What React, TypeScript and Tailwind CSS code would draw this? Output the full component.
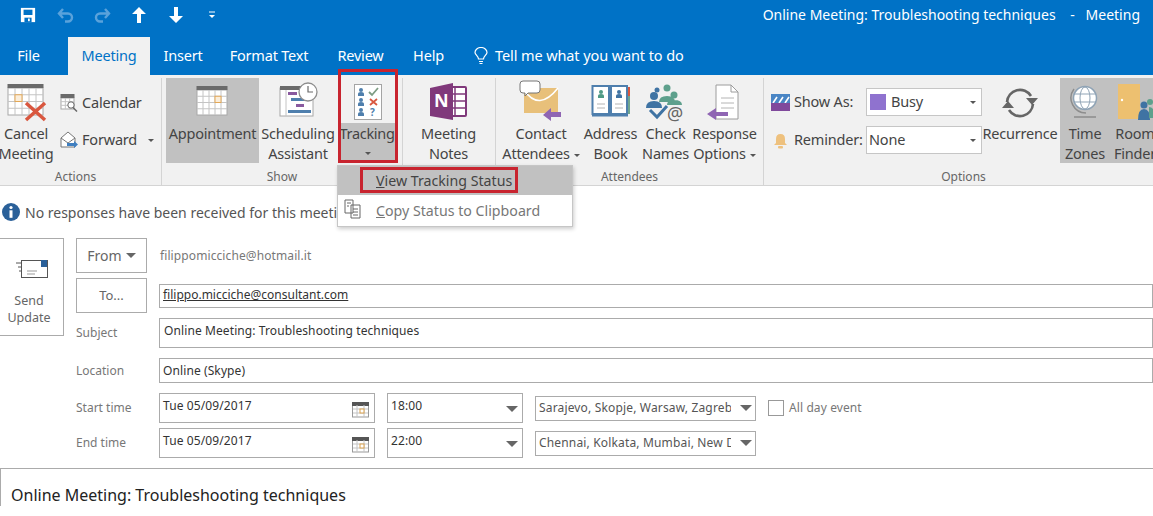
import * as React from "react";

const ui = { fontFamily: '"Noto Sans", "Open Sans", sans-serif' };

function CalGrid({ x, y, w, h, cols, rows, accent }: { x: number; y: number; w: number; h: number; cols: number; rows: number; accent?: [number, number] }) {
  const cw = w / cols;
  const ch = h / rows;
  return (
    <g>
      <rect x={x} y={y} width={w} height={h} fill="#fff" stroke="#a8a8a8" />
      {Array.from({ length: cols - 1 }).map((_, i) => (
        <line key={i} x1={x + cw * (i + 1)} x2={x + cw * (i + 1)} y1={y} y2={y + h} stroke="#c4c4c4" />
      ))}
      {Array.from({ length: rows - 1 }).map((_, i) => (
        <line key={i} y1={y + ch * (i + 1)} y2={y + ch * (i + 1)} x1={x} x2={x + w} stroke="#c4c4c4" />
      ))}
      {accent && <rect x={x + cw * accent[0]} y={y + ch * accent[1]} width={cw} height={ch} fill="#fbeedb" stroke="#e3a857" />}
      <rect x={x - 0.5} y={y - 4} width={w + 1} height={4} fill="#6a6a6a" />
    </g>
  );
}

function CancelIcon() {
  return (
    <svg width="48" height="44" viewBox="0 0 48 44">
      <CalGrid x={6} y={9} w={35} h={27} cols={5} rows={4} accent={[1, 1]} />
      <path d="M24 24 L43 41 M43 24 L24 41" stroke="#d9573f" strokeWidth="3.5" />
    </svg>
  );
}

function AppointmentIcon() {
  return (
    <svg width="34" height="32" viewBox="0 0 34 32">
      <CalGrid x={1} y={5} w={30} h={25} cols={5} rows={4} accent={[3, 1]} />
    </svg>
  );
}

function SchedulingIcon() {
  return (
    <svg width="44" height="42" viewBox="0 0 44 42">
      <rect x="4" y="8" width="33" height="28" fill="#fff" stroke="#a8a8a8" />
      <rect x="4" y="6" width="33" height="4" fill="#6a6a6a" />
      <rect x="12" y="12" width="9" height="3" fill="#8a5a9f" />
      <rect x="15" y="18" width="14" height="3" fill="#4f7fad" />
      <rect x="20" y="24" width="8" height="3" fill="#8a5a9f" />
      <rect x="12" y="30" width="23" height="3" fill="#4f7fad" />
      <path d="M10 10v26" stroke="#c4c4c4" />
      <circle cx="32" cy="12" r="9" fill="#fff" stroke="#8e8e8e" strokeWidth="1.3" />
      <path d="M32 6v6h5" fill="none" stroke="#6a6a6a" strokeWidth="1.2" />
    </svg>
  );
}

function Person({ x, y, c }: { x: number; y: number; c: string }) {
  return (
    <g fill={c}>
      <circle cx={x} cy={y} r="2" />
      <path d={`M${x - 3} ${y + 6} v-2 q0 -2 3 -2 q3 0 3 2 v2 z`} />
    </g>
  );
}

function TrackingIcon() {
  return (
    <svg width="30" height="38" viewBox="0 0 30 38">
      <rect x="1.5" y="1.5" width="27" height="35" fill="#fff" stroke="#a4a4a4" />
      <Person x={8} y={7} c="#4f7fad" />
      <Person x={8} y={17} c="#4f7fad" />
      <Person x={8} y={27} c="#4f7fad" />
      <path d="M16 9 l3 3 l6 -7" fill="none" stroke="#7d9c83" strokeWidth="1.8" />
      <path d="M17 16 l7 6 M24 16 l-7 6" stroke="#d9573f" strokeWidth="1.8" />
      <text x="17" y="33" fontSize="10" fontWeight="700" fill="#4f7fad" style={ui}>?</text>
    </svg>
  );
}

function NotesIcon() {
  return (
    <svg width="38" height="38" viewBox="0 0 38 38">
      <rect x="18" y="4" width="18" height="29" rx="1" fill="#fff" stroke="#80397b" strokeWidth="2" />
      <path d="M25 4v29M19 11h16M19 18h16M19 25h16" stroke="#80397b" strokeWidth="1.5" />
      <path d="M0 5 L23 0 V37 L0 33 Z" fill="#80397b" />
      <text x="4" y="24" fontSize="18" fontWeight="700" fill="#fff" style={ui}>N</text>
    </svg>
  );
}

function ContactIcon() {
  return (
    <svg width="44" height="42" viewBox="0 0 44 42">
      <rect x="5" y="8" width="34" height="25" fill="#e8c07a" />
      <path d="M5 10 Q20 32 39 8" fill="none" stroke="#fff" strokeWidth="1.6" />
      <path d="M4 1h14q3 0 3 3v6q0 3 -3 3H9l-3 3v-3H4q-3 0 -3 -3V4q0 -3 3 -3z" fill="#fff" stroke="#777" />
      <path d="M24 35 l8 -7 v4 h10 v5 h-10 v4 z" fill="#8f65b3" />
    </svg>
  );
}

function BookIcon() {
  return (
    <svg width="40" height="36" viewBox="0 0 40 36">
      <rect x="36" y="3" width="3" height="9" fill="#d9573f" />
      <rect x="36" y="12" width="3" height="9" fill="#6fa58f" />
      <rect x="36" y="21" width="3" height="9" fill="#6fa58f" />
      <path d="M1.5 2 H18 V30 H1.5 Z M20 2 H36 V30 H20 Z" fill="#fff" stroke="#4f7fad" strokeWidth="2" />
      <path d="M1 31.5 H37" stroke="#4f7fad" strokeWidth="2" />
      <Person x={10} y={8} c="#4f9a85" />
      <Person x={28} y={8} c="#3f73a3" />
      <path d="M6 20h8M6 24h8M24 20h8M24 24h8" stroke="#b4b4b4" />
    </svg>
  );
}

function NamesIcon() {
  return (
    <svg width="40" height="38" viewBox="0 0 40 38">
      <circle cx="21" cy="4" r="3.5" fill="#5ea08c" />
      <circle cx="11" cy="6" r="2.5" fill="#3f73a3" />
      <circle cx="28" cy="11" r="3.5" fill="#5ea08c" />
      <circle cx="8" cy="12" r="4" fill="#3f73a3" />
      <path d="M13 18 q0 -6 8 -6 q8 0 8 6 z M21 21 q0 -5 7 -5 q8 0 8 5 z" fill="#5ea08c" />
      <path d="M0 24 q0 -7 8 -7 q8 0 8 7 z" fill="#3f73a3" />
      <path d="M4 26 l7 7 l10 -11" fill="none" stroke="#3f73a3" strokeWidth="3" />
      <text x="21" y="36" fontSize="18" fill="#666" style={ui}>@</text>
    </svg>
  );
}

function ResponseIcon() {
  return (
    <svg width="36" height="38" viewBox="0 0 36 38">
      <path d="M9 1 H24 L31 8 V35 H9 Z" fill="#fff" stroke="#9c9c9c" />
      <path d="M24 1 V8 H31" fill="none" stroke="#9c9c9c" />
      <path d="M14 14h13M14 19h13M14 24h13" stroke="#b4b4b4" />
      <path d="M0 30 l9 -6 v4 h12 v4 h-12 v4 z" fill="#8f65b3" />
    </svg>
  );
}

function RecurrenceIcon() {
  return (
    <svg width="40" height="36" viewBox="0 0 40 36">
      <path d="M7 17 A13 13 0 0 1 31 11" fill="none" stroke="#666" strokeWidth="2.6" />
      <path d="M33 19 A13 13 0 0 1 9 25" fill="none" stroke="#666" strokeWidth="2.6" />
      <path d="M26 13 H38 L32 20 Z M2 23 H14 L8 16 Z" fill="#666" />
    </svg>
  );
}

function GlobeIcon() {
  return (
    <svg width="30" height="36" viewBox="0 0 30 36">
      <path d="M4 6 A15 15 0 0 0 16 30" fill="none" stroke="#8d8d8d" strokeWidth="1.5" />
      <circle cx="15" cy="15" r="11.5" fill="#fff" stroke="#8fa3b5" strokeWidth="1.5" />
      <ellipse cx="15" cy="15" rx="5" ry="11" fill="none" stroke="#8fa3b5" />
      <path d="M4 11h22M4 19h22" stroke="#8fa3b5" />
      <rect x="4" y="33" width="22" height="2" fill="#999" />
    </svg>
  );
}

function RoomIcon() {
  return (
    <svg width="40" height="40" viewBox="0 0 40 40">
      <rect x="3" y="1" width="22" height="35" fill="#edc070" />
      <circle cx="7" cy="17" r="1.2" fill="#fff" />
      <circle cx="29" cy="22" r="3.5" fill="#3f73a3" />
      <circle cx="35" cy="19" r="3" fill="#5ea08c" />
      <path d="M23 37 q0 -11 6 -11 q6 0 6 11 z" fill="#3f73a3" />
      <path d="M34 35 v-11 q6 0 6 11 z" fill="#5ea08c" />
    </svg>
  );
}

function Caret({ className = "" }: { className?: string }) {
  return <span className={`inline-block h-0 w-0 border-x-[3px] border-t-[3px] border-x-transparent border-t-[#555] align-middle ${className}`} />;
}

function BigButton({ icon, lines, width, caret, active, iconTop = 0 }: { icon: React.ReactNode; lines: string[]; width: number; caret?: boolean; active?: boolean; iconTop?: number }) {
  return (
    <div className={`flex h-[85px] shrink-0 flex-col items-center ${active ? "bg-[#c1c1c1]" : ""}`} style={{ width }}>
      <div className="flex h-[45px] items-start justify-center" style={{ paddingTop: iconTop }}>
        {icon}
      </div>
      {lines.map((line, i) => (
        <div key={line} className="whitespace-nowrap text-[14.5px] leading-[20px] tracking-[-0.2px] text-[#444]">
          {line}
          {caret && i === lines.length - 1 && <Caret className="ml-[4px]" />}
        </div>
      ))}
    </div>
  );
}

function Group({ label, width, children, padLeft = 0, labelClass = "" }: { label?: string; width: number; children: React.ReactNode; padLeft?: number; labelClass?: string }) {
  return (
    <div className="flex shrink-0 flex-col border-r border-[#d4d4d4] pb-[4px]" style={{ width }}>
      <div className="flex h-[85px]" style={{ paddingLeft: padLeft }}>
        {children}
      </div>
      <div className={`flex-1 pt-[6px] text-center text-[12px] leading-[16px] text-[#666] ${labelClass}`}>{label}</div>
    </div>
  );
}

function Combo({ children }: { children: React.ReactNode }) {
  return (
    <div className="flex h-[28px] w-[116px] items-center justify-between border border-[#c6c6c6] bg-white pl-[2px] pr-[5px] text-[14.5px] tracking-[-0.2px] text-[#444]">
      <span className="flex items-center">{children}</span>
      <Caret />
    </div>
  );
}

function Ribbon() {
  return (
    <div className="flex h-[111px] overflow-hidden border-b border-[#d4d4d4] bg-[#f1f1f1] pt-[3px]">
      <Group label="Actions" width={162} labelClass="pr-[10px]">
        <div className="-ml-[2px] w-[56px] shrink-0">
          <BigButton icon={<CancelIcon />} lines={["Cancel", "Meeting"]} width={56} iconTop={1} />
        </div>
        <div className="flex flex-col pl-[6px] pt-[10px] text-[14.5px] tracking-[-0.2px] text-[#444]">
          <div className="flex h-[30px] items-center gap-[4px]">
            <svg width="18" height="18" viewBox="0 0 18 18">
              <CalGrid x={1} y={4} w={13} h={11} cols={3} rows={3} />
              <circle cx="11" cy="11" r="3.2" fill="#fff" stroke="#666" />
              <path d="M13 13.5l4 4" stroke="#666" strokeWidth="1.5" />
            </svg>
            Calendar
          </div>
          <div className="mt-[7px] flex h-[30px] items-center gap-[4px]">
            <svg width="18" height="18" viewBox="0 0 18 18">
              <path d="M1 7 L8 1 L15 7 V16 H1 Z" fill="#fff" stroke="#777" />
              <path d="M1 7 L8 12 L15 7" fill="none" stroke="#777" />
              <path d="M7 12h7v-2l4 3.5l-4 3.5v-2H7z" fill="#3f7fc0" />
            </svg>
            Forward
            <Caret className="ml-[7px]" />
          </div>
        </div>
      </Group>
      <Group label="Show" width={241} padLeft={4}>
        <BigButton icon={<AppointmentIcon />} lines={["Appointment"]} width={93} active iconTop={7} />
        <BigButton icon={<SchedulingIcon />} lines={["Scheduling", "Assistant"]} width={78} iconTop={2} />
        <div className="ml-[2px] flex h-[85px] w-[58px] flex-col items-center">
          <div className="flex h-[45px] items-start justify-center pt-[5px]">
            <TrackingIcon />
          </div>
          <div className="flex w-full flex-1 flex-col items-center bg-[#c1c1c1]">
            <div className="whitespace-nowrap pr-[2px] text-[14.5px] leading-[20px] tracking-[-0.3px] text-[#444]">Tracking</div>
            <div className="pt-[2px] leading-[14px]">
              <Caret />
            </div>
          </div>
        </div>
      </Group>
      <Group width={93}>
        <BigButton icon={<NotesIcon />} lines={["Meeting", "Notes"]} width={91} iconTop={5} />
      </Group>
      <Group label="Attendees" width={268} padLeft={6}>
        <BigButton icon={<ContactIcon />} lines={["Contact", "Attendees"]} width={78} caret iconTop={2} />
        <BigButton icon={<BookIcon />} lines={["Address", "Book"]} width={61} iconTop={6} />
        <BigButton icon={<NamesIcon />} lines={["Check", "Names"]} width={49} iconTop={6} />
        <BigButton icon={<ResponseIcon />} lines={["Response", "Options"]} width={69} caret iconTop={6} />
      </Group>
      <Group label="Options" width={400} padLeft={7}>
        <div className="flex w-[211px] shrink-0 flex-col pt-[10px] text-[14.5px] tracking-[-0.2px] text-[#444]">
          <div className="flex items-center">
            <svg width="19" height="17" viewBox="0 0 19 17" className="mr-[4px] shrink-0">
              <rect width="19" height="9" fill="#4a86c5" />
              <path d="M2 9l4-6M8 9l4-6M14 9l4-6" stroke="#fff" strokeWidth="1.6" />
              <rect y="9" width="19" height="8" fill="#80499c" />
            </svg>
            <span className="w-[72px]">Show As:</span>
            <Combo>
              <span className="mr-[5px] ml-[1px] inline-block h-[16px] w-[16px] bg-[#8f72cf]" />
              Busy
            </Combo>
          </div>
          <div className="mt-[10px] flex items-center">
            <svg width="19" height="17" viewBox="0 0 19 17" className="mr-[4px] shrink-0">
              <path d="M5 11 V7 q0 -5 4.5 -5 q4.5 0 4.5 5 v4 l2 2 H3 Z" fill="#eec17e" />
              <rect x="7" y="14" width="5" height="2.5" rx="1" fill="#eec17e" />
            </svg>
            <span className="w-[72px]">Reminder:</span>
            <Combo>None</Combo>
          </div>
        </div>
        <BigButton icon={<RecurrenceIcon />} lines={["Recurrence"]} width={76} iconTop={7} />
        <div className="ml-[2px] flex h-[85px] flex-1 bg-[#c1c1c1]">
          <BigButton icon={<GlobeIcon />} lines={["Time", "Zones"]} width={50} iconTop={5} />
          <BigButton icon={<RoomIcon />} lines={["Room", "Finder"]} width={50} iconTop={5} />
        </div>
      </Group>
    </div>
  );
}

function TitleBar() {
  return (
    <div className="flex h-[37px] items-center bg-[#0072c6] pb-[9px] text-white">
      <div className="mt-[2px] flex items-center">
        <svg width="16" height="16" viewBox="0 0 18 18" className="ml-[20px]">
          <path d="M1 1 H17 V17 H1 Z" fill="#fff" />
          <rect x="4" y="3" width="10" height="6" fill="#0072c6" />
          <rect x="5" y="12" width="8" height="5" fill="#0072c6" />
          <rect x="9" y="13" width="2" height="3" fill="#fff" />
        </svg>
        <svg width="18" height="16" viewBox="0 0 18 16" className="ml-[21px]" fill="none" stroke="#5aa2db" strokeWidth="2.4">
          <path d="M6 2 L2 6.5 L6 11 M2 6.5 H11 a4 4 0 0 1 0 8 H8" />
        </svg>
        <svg width="18" height="16" viewBox="0 0 18 16" className="ml-[18px]" fill="none" stroke="#5aa2db" strokeWidth="2.4">
          <path d="M12 2 L16 6.5 L12 11 M16 6.5 H7 a4 4 0 0 0 0 8 H10" />
        </svg>
        <svg width="14" height="16" viewBox="0 0 14 16" className="ml-[21px]">
          <path d="M7 0 L14 7 H9 V16 H5 V7 H0 Z" fill="#fff" />
        </svg>
        <svg width="14" height="16" viewBox="0 0 14 16" className="ml-[23px]">
          <path d="M7 16 L14 9 H9 V0 H5 V9 H0 Z" fill="#fff" />
        </svg>
        <svg width="6" height="8" viewBox="0 0 6 8" className="ml-[26px]">
          <path d="M0 1h6" stroke="#fff" />
          <path d="M0 4h6L3 7z" fill="#fff" />
        </svg>
      </div>
      <div className="ml-auto whitespace-pre pr-[13px] text-[14px]">Online Meeting: Troubleshooting techniques    -   Meeting</div>
    </div>
  );
}

function Tabs() {
  const tabs: [string, number, number][] = [
    ["File", 57, 11],
    ["Meeting", 82, 0],
    ["Insert", 66, 0],
    ["Format Text", 106, 0],
    ["Review", 77, 0],
    ["Help", 59, 0],
  ];
  return (
    <div className="flex h-[38px] bg-[#0072c6] text-[14.5px] tracking-[-0.2px] text-white">
      {tabs.map(([name, w, mr]) => (
        <div key={name} style={{ width: w, marginRight: mr }} className={`flex items-center justify-center ${name === "Meeting" ? "bg-[#f1f1f1] text-[#0072c6]" : ""}`}>
          {name}
        </div>
      ))}
      <div className="flex items-center pl-[16px] tracking-[-0.1px]">
        <svg width="14" height="18" viewBox="0 0 14 18" fill="none" stroke="#fff" strokeWidth="1.2" className="mr-[7px]">
          <path d="M4.5 12 C4.5 9 1 8 1 5.5 A6 5 0 0 1 13 5.5 C13 8 9.5 9 9.5 12 Z" />
          <path d="M5 14.5h4M5.5 16.5h3" />
        </svg>
        Tell me what you want to do
      </div>
    </div>
  );
}

function Box({ children, width, height, className = "" }: { children?: React.ReactNode; width?: number; height: number; className?: string }) {
  return (
    <div className={`flex items-center border border-[#ababab] bg-white text-[12px] tracking-[0.1px] text-[#333] ${className}`} style={{ width, height }}>
      {children}
    </div>
  );
}

function Arrow() {
  return <span className="h-0 w-0 border-x-[6px] border-t-[6px] border-x-transparent border-t-[#666]" />;
}

function CalMini() {
  return (
    <svg width="17" height="16" viewBox="0 0 17 16">
      <rect x="0.5" y="3" width="16" height="12" fill="#fff" stroke="#999" />
      <rect x="0" y="0" width="17" height="4" fill="#555" />
      <path d="M5 3v12M12 3v12M1 7h15M1 11h15" stroke="#c4c4c4" />
      <rect x="8" y="7" width="4" height="4" fill="#fff" stroke="#d9a14f" />
    </svg>
  );
}

function Row({ label, children, className = "" }: { label: string; children: React.ReactNode; className?: string }) {
  return (
    <div className={`flex items-center ${className}`}>
      <div className="w-[83px] shrink-0 text-[12px] text-[#777]">{label}</div>
      {children}
    </div>
  );
}

function TimeRow({ label, date, time, zone, className = "", allDay }: { label: string; date: string; time: string; zone: string; className?: string; allDay?: boolean }) {
  return (
    <Row label={label} className={className}>
      <Box width={216} height={30} className="justify-between pl-[3px] pr-[5px]">
        <span className="pb-[4px]">{date}</span>
        <span className="pt-[3px]">
          <CalMini />
        </span>
      </Box>
      <Box width={136} height={30} className="ml-[12px] justify-between pl-[3px] pr-[3px]">
        <span className="pb-[4px]">{time}</span>
        <span className="flex pt-[1px] pr-[1px]">
          <Arrow />
        </span>
      </Box>
      <Box width={221} height={25} className="ml-[12px] justify-between pl-[3px] pr-[3px] text-[#555]">
        <span className="w-[192px] overflow-hidden whitespace-nowrap tracking-[0.16px]">{zone}</span>
        <Arrow />
      </Box>
      {allDay && (
        <div className="ml-[12px] flex items-center text-[12px] tracking-[0.1px] text-[#777]">
          <span className="mr-[5px] h-[16px] w-[16px] border border-[#999] bg-white" />
          All day event
        </div>
      )}
    </Row>
  );
}

function Form() {
  return (
    <div className="flex-1 overflow-hidden bg-white">
      <div className="flex h-[52px] items-center pl-[2px] text-[14px] text-[#555]">
        <svg width="18" height="18" viewBox="0 0 18 18" className="mr-[5px]">
          <circle cx="9" cy="9" r="9" fill="#2a6099" />
          <circle cx="9" cy="4.5" r="1.6" fill="#fff" />
          <rect x="7.5" y="7.3" width="3" height="7.5" fill="#fff" />
        </svg>
        No responses have been received for this meeting.
      </div>
      <div className="flex">
        <div className="flex h-[98px] w-[64px] shrink-0 flex-col items-center border border-l-0 border-[#ababab] text-[12.5px] leading-[17px] text-[#666]">
          <svg width="34" height="20" viewBox="0 0 34 20" className="mb-[13px] mt-[20px]">
            <rect x="6.5" y="1.5" width="26" height="17" fill="#fff" stroke="#555" />
            <rect x="26" y="1" width="6" height="7" fill="#2a6099" />
            <path d="M12 12h10M12 15h8" stroke="#999" />
            <path d="M1 4h5M3 8h3M4 12h2" stroke="#555" />
          </svg>
          <div className="pr-[5px]">Send</div>
          <div className="pr-[5px]">Update</div>
        </div>
        <div className="ml-[12px] flex-1">
          <div className="flex h-[35px] items-center">
            <div className="flex h-[35px] w-[71px] items-center justify-center gap-[4px] border border-[#ababab] text-[14px] text-[#666]">
              From
              <span className="h-0 w-0 border-x-[5px] border-t-[5px] border-x-transparent border-t-[#666]" />
            </div>
            <div className="ml-[13px] text-[12px] tracking-[0.1px] text-[#777]">filippomicciche@hotmail.it</div>
          </div>
          <div className="mt-[5px] flex h-[35px] items-center">
            <div className="flex h-[35px] w-[71px] items-center justify-center border border-[#ababab] pt-[1px] text-[13px] text-[#666]">To...</div>
            <Box height={24} className="ml-[12px] flex-1 pb-[1px] pl-[3px]">
              <span className="tracking-normal underline">filippo.micciche@consultant.com</span>
            </Box>
          </div>
          <Row label="Subject" className="mt-[5px]">
            <Box height={30} className="flex-1 items-start pl-[4px] pt-[3px]">
              Online Meeting: Troubleshooting techniques
            </Box>
          </Row>
          <Row label="Location" className="mt-[10px]">
            <Box height={25} className="flex-1 pl-[3px]">
              Online (Skype)
            </Box>
          </Row>
          <TimeRow label="Start time" date="Tue 05/09/2017" time="18:00" zone="Sarajevo, Skopje, Warsaw, Zagreb" className="mt-[10px]" allDay />
          <TimeRow label="End time" date="Tue 05/09/2017" time="22:00" zone="Chennai, Kolkata, Mumbai, New Delhi" className="mt-[5px]" />
        </div>
      </div>
      <div className="mt-[10px] border-l border-t border-[#ababab] pl-[10px] pt-[15px] text-[16px] leading-[22px] text-[#222]">Online Meeting: Troubleshooting techniques</div>
    </div>
  );
}

export default function App() {
  return (
    <div className="relative flex h-[516px] w-[1153px] flex-col overflow-hidden bg-white" style={ui}>
      <TitleBar />
      <Tabs />
      <Ribbon />
      <Form />

      {/* dropdown menu and the red marks drawn over the ribbon */}
      <div className="absolute left-[337px] top-[165px] h-[62px] w-[236px] border border-[#c6c6c6] bg-white text-[14.2px] shadow-[1px_2px_4px_rgba(0,0,0,0.2)]">
        <div className="flex h-[29px] items-center bg-[#c1c1c1] pl-[38px] text-[#444]">
          <span>
            <span className="underline">V</span>iew Tracking Status
          </span>
        </div>
        <div className="flex h-[31px] items-center pl-[38px] text-[#777]">
          <svg width="18" height="20" viewBox="0 0 18 20" fill="none" stroke="#666" className="absolute left-[6px] top-[33px]">
            <path d="M1 1h8v13H1zM7 6h9v13H7z" fill="#fff" />
            <path d="M9 10h5M9 13h5M9 16h5M3 4h4M3 7h2" />
          </svg>
          <span>
            <span className="underline">C</span>opy Status to Clipboard
          </span>
        </div>
      </div>
      <div className="absolute left-[338px] top-[69px] h-[94px] w-[60px] border-[3px] border-[#c8242f]" />
      <div className="absolute left-[360px] top-[167px] h-[26px] w-[158px] border-[3px] border-[#c8242f]" />
    </div>
  );
}
